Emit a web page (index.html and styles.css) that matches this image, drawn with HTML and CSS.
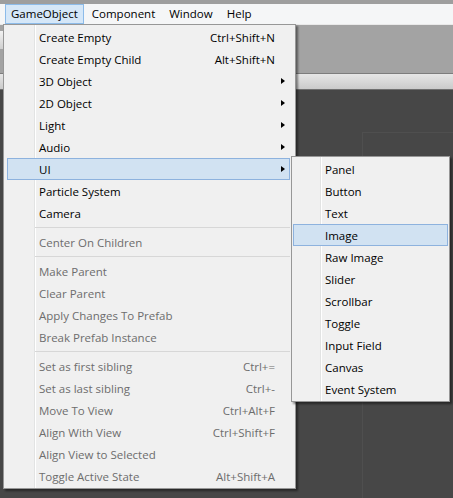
FILE: index.html
```html
<!DOCTYPE html>
<html>
<head>
<meta charset="utf-8">
<link rel="stylesheet" href="styles.css">
</head>
<body>
<div class="screen">
  <div class="topstrip"></div>
  <div class="menubar">
    <span class="mb-item active">GameObject</span>
    <span class="mb-item">Component</span>
    <span class="mb-item">Window</span>
    <span class="mb-item">Help</span>
  </div>
  <div class="toolbar"><div class="tb-btn"></div></div>
  <div class="tabband"></div>
  <div class="dark"><div class="panel-outline"></div></div>

  <div class="menu main-menu">
    <div class="item"><span class="label">Create Empty</span><span class="key">Ctrl+Shift+N</span><span class="arrow-cell"></span></div>
    <div class="item"><span class="label">Create Empty Child</span><span class="key">Alt+Shift+N</span><span class="arrow-cell"></span></div>
    <div class="item"><span class="label">3D Object</span><span class="arrow-cell"><i class="arrow"></i></span></div>
    <div class="item"><span class="label">2D Object</span><span class="arrow-cell"><i class="arrow"></i></span></div>
    <div class="item"><span class="label">Light</span><span class="arrow-cell"><i class="arrow"></i></span></div>
    <div class="item"><span class="label">Audio</span><span class="arrow-cell"><i class="arrow"></i></span></div>
    <div class="item hot"><span class="label">UI</span><span class="arrow-cell"><i class="arrow"></i></span></div>
    <div class="item"><span class="label">Particle System</span><span class="arrow-cell"></span></div>
    <div class="item"><span class="label">Camera</span><span class="arrow-cell"></span></div>
    <div class="sep"></div>
    <div class="item off"><span class="label">Center On Children</span><span class="arrow-cell"></span></div>
    <div class="sep"></div>
    <div class="item off"><span class="label">Make Parent</span><span class="arrow-cell"></span></div>
    <div class="item off"><span class="label">Clear Parent</span><span class="arrow-cell"></span></div>
    <div class="item off"><span class="label">Apply Changes To Prefab</span><span class="arrow-cell"></span></div>
    <div class="item off"><span class="label">Break Prefab Instance</span><span class="arrow-cell"></span></div>
    <div class="sep"></div>
    <div class="item off"><span class="label">Set as first sibling</span><span class="key">Ctrl+=</span><span class="arrow-cell"></span></div>
    <div class="item off"><span class="label">Set as last sibling</span><span class="key">Ctrl+-</span><span class="arrow-cell"></span></div>
    <div class="item off"><span class="label">Move To View</span><span class="key">Ctrl+Alt+F</span><span class="arrow-cell"></span></div>
    <div class="item off"><span class="label">Align With View</span><span class="key">Ctrl+Shift+F</span><span class="arrow-cell"></span></div>
    <div class="item off"><span class="label">Align View to Selected</span><span class="arrow-cell"></span></div>
    <div class="item off"><span class="label">Toggle Active State</span><span class="key">Alt+Shift+A</span><span class="arrow-cell"></span></div>
  </div>

  <div class="menu sub-menu">
    <div class="item"><span class="label">Panel</span></div>
    <div class="item"><span class="label">Button</span></div>
    <div class="item"><span class="label">Text</span></div>
    <div class="item hot"><span class="label">Image</span></div>
    <div class="item"><span class="label">Raw Image</span></div>
    <div class="item"><span class="label">Slider</span></div>
    <div class="item"><span class="label">Scrollbar</span></div>
    <div class="item"><span class="label">Toggle</span></div>
    <div class="item"><span class="label">Input Field</span></div>
    <div class="item"><span class="label">Canvas</span></div>
    <div class="item"><span class="label">Event System</span></div>
  </div>
</div>
</body>
</html>
```
FILE: styles.css
```css
* { box-sizing: border-box; }
html, body { margin: 0; padding: 0; }
body {
  width: 453px;
  height: 498px;
  overflow: hidden;
  font-family: "Open Sans", "Noto Sans", sans-serif;
  font-size: 11.5px;
  color: #000;
}
.screen {
  position: relative;
  width: 453px;
  height: 498px;
  display: flex;
  flex-direction: column;
  background: #474747;
}
.topstrip { height: 4px; background: #9e9e9e; }
.menubar {
  height: 20px;
  background: #f5f6f7;
  display: flex;
  align-items: stretch;
  padding-left: 5px;
}
.mb-item {
  display: flex;
  align-items: center;
  padding: 0 5px 1px 5px;
  border: 1px solid transparent;
  margin-right: 2px;
}
.mb-item.active {
  background: #d5e7f8;
  border-color: #8cbbe9;
}
.toolbar {
  height: 49px;
  background: #a3a3a3;
  border-top: 1px solid #e9e9e9;
  padding-top: 6px;
}
.tb-btn {
  width: 3px;
  height: 18px;
  background: linear-gradient(#f2f2f2, #cfcfcf);
}
.tabband {
  height: 17px;
  border-top: 1px solid #7d7d7d;
  border-bottom: 1px solid #6f6f6f;
  background: linear-gradient(#e6e6e6, #cacaca);
}
.dark {
  flex: 1;
  background: #474747;
  display: flex;
  padding: 42px 0 0 362px;
}
.panel-outline {
  flex: 1;
  border-top: 1px solid #4f4f4f;
  border-left: 1px solid #4f4f4f;
}

.menu {
  position: absolute;
  background-color: #f0f0f0;
  border: 1px solid #979797;
  box-shadow: 2px 2px 2px rgba(0, 0, 0, 0.45);
  background-repeat: no-repeat;
}
.main-menu {
  left: 3px;
  top: 24px;
  width: 293px;
  padding: 1px 5px 1px 3px;
  background-image: linear-gradient(to right, transparent 30px, #e2e3e3 30px, #e2e3e3 31px, #ffffff 31px, #ffffff 32px, transparent 32px);
}
.sub-menu {
  left: 291px;
  top: 156px;
  width: 159px;
  padding: 1px;
  background-image: linear-gradient(to right, transparent 28px, #e2e3e3 28px, #e2e3e3 29px, #ffffff 29px, #ffffff 30px, transparent 30px);
}
.item {
  height: 22px;
  display: flex;
  align-items: center;
  border: 1px solid transparent;
  padding-left: 31px;
  white-space: nowrap;
}
.item.hot {
  background: #d1e2f2;
  border-color: #8db2de;
}
.item.off { color: #6d6d6d; }
.label { flex: 1; }
.key { text-align: right; }
.arrow-cell {
  width: 14px;
  height: 100%;
  display: flex;
  align-items: center;
  justify-content: center;
}
.arrow {
  display: block;
  width: 0;
  height: 0;
  border-left: 4px solid #000;
  border-top: 3.5px solid transparent;
  border-bottom: 3.5px solid transparent;
  margin-left: 1px;
}
.sep {
  height: 7px;
  margin-left: 28px;
  padding-top: 3px;
}
.sep::before {
  content: "";
  display: block;
  height: 1px;
  background: #d7d7d7;
}
```
